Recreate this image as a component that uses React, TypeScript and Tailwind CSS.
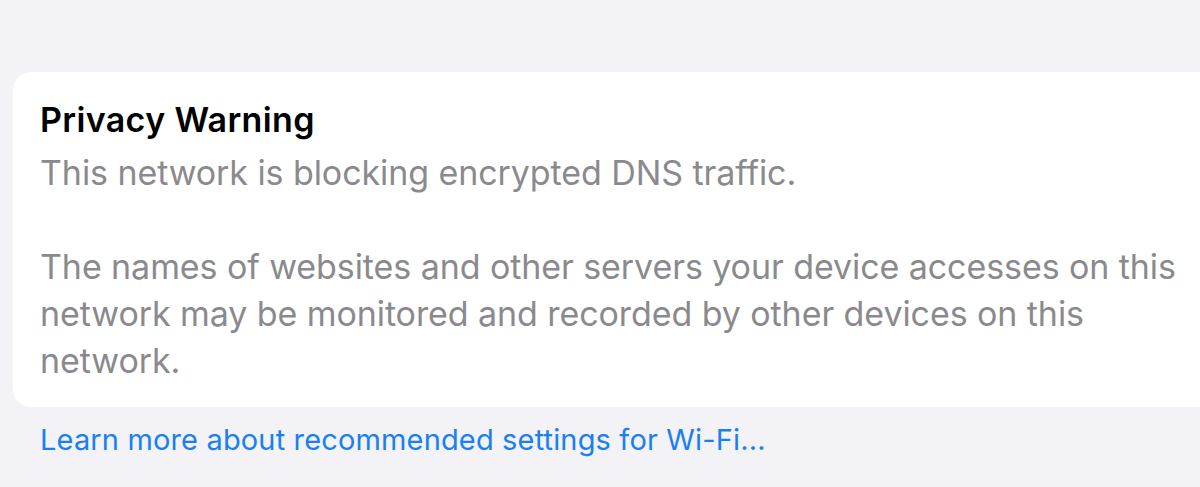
import React from 'react';

export default function App() {
    return (
        <div className="w-full h-[487px] overflow-hidden bg-[#f2f2f7] pt-[72px] pl-[13px] font-['Inter','Noto_Sans',sans-serif] antialiased">
            <div className="w-[1215px] bg-white rounded-l-[18px] pl-[27px] pr-[30px] pt-[24px] pb-[23px]">
                <h2 className="text-[34px] leading-[47px] font-semibold text-black tracking-[0.35px]">
                    Privacy Warning
                </h2>
                <div className="mt-[6px] text-[34px] leading-[47px] text-[#8a8a8e] tracking-[-0.08px]">
                    <p>This network is blocking encrypted DNS traffic.</p>
                    <p className="mt-[47px]">
                        The names of websites and other servers your device accesses on this network may be
                        monitored and recorded by other devices on this network.
                    </p>
                </div>
            </div>
            <a className="block mt-[15px] pl-[27px] text-[29px] leading-[36px] text-[#1a7ff0] tracking-[0.15px]">
                Learn more about recommended settings for Wi-Fi...
            </a>
        </div>
    );
}
